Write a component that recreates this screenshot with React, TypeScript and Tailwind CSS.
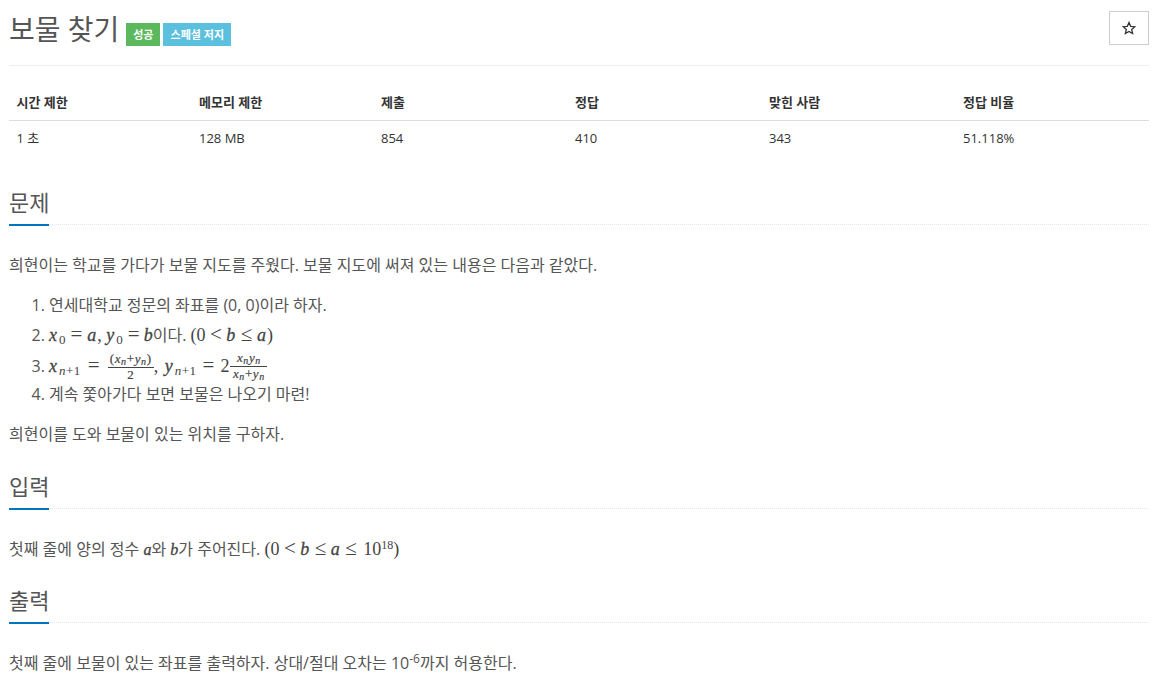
import React from 'react';

const stats = [
  { label: '시간 제한', value: '1 초', width: 'w-[182.5px]' },
  { label: '메모리 제한', value: '128 MB', width: 'w-[182px]' },
  { label: '제출', value: '854', width: 'w-[194px]' },
  { label: '정답', value: '410', width: 'w-[194px]' },
  { label: '맞힌 사람', value: '343', width: 'w-[194px]' },
  { label: '정답 비율', value: '51.118%', width: 'w-[193.5px]' }
];

// math runs are set in a serif; only the italic letters are thickened, like the TeX font
const M: React.FC<{ children: React.ReactNode }> = ({ children }) => (
  <span className="font-['Liberation_Serif',serif] text-[#444] text-[18px]">{children}</span>
);

const V: React.FC<{ children: React.ReactNode; className?: string }> = ({ children, className = 'pr-[1px]' }) => (
  <i className={`[-webkit-text-stroke:0.3px_#444] ${className}`}>{children}</i>
);

const Op: React.FC<{ children: React.ReactNode; className?: string }> = ({ children, className = 'mx-[4.5px]' }) => (
  <span className={`text-[21px] leading-none ${className}`}>{children}</span>
);

const Sub: React.FC<{ children: React.ReactNode }> = ({ children }) => (
  <span className="relative top-[3px] ml-[1px] text-[13px]">{children}</span>
);

const SubN: React.FC = () => (
  <span className="relative top-[3px] ml-[1px] text-[13px] tracking-[0.5px]"><i>n</i>+1</span>
);

const Tiny: React.FC<{ children: React.ReactNode }> = ({ children }) => (
  <i className="relative top-[2px] text-[10px]">{children}</i>
);

const Frac: React.FC<{ top: React.ReactNode; bottom: React.ReactNode; width: string }> = ({ top, bottom, width }) => (
  <span className={`relative -top-[1px] inline-flex flex-col items-center align-middle text-[13px] leading-[14px] tracking-[0.6px] [-webkit-text-stroke:0.2px_#444] ${width}`}>
    <span className="w-full text-center border-b border-[#444]">{top}</span>
    <span className="w-full text-center">{bottom}</span>
  </span>
);

const SectionTitle: React.FC<{ children: React.ReactNode }> = ({ children }) => (
  <div className="border-b border-dotted border-[#e3e8f0] h-[43px] mb-[27px]">
    <h2 className="inline-block h-[44px] border-b-2 border-[#0076c0] text-[22px] leading-[33px] pt-[4px] text-[#555] font-normal">
      {children}
    </h2>
  </div>
);

export default function App() {
  return (
    <div className="w-[1156px] h-[688px] overflow-hidden bg-white pl-[9px] pr-[7px] text-[16px] leading-[26px] text-[#555] font-['Open_Sans','Noto_Sans_CJK_KR',sans-serif]">
      <div className="flex justify-between items-start h-[66px] border-b border-[#eeeeee]">
        <div className="flex items-start">
          <h1 className="text-[28px] leading-[40px] pt-[9px] text-[#555] font-normal">보물 찾기</h1>
          <span className="mt-[23px] ml-[7px] h-[23px] w-[34px] bg-[#5cb85c] text-white text-[11px] font-bold leading-[23px] text-center">성공</span>
          <span className="mt-[23px] ml-[3px] h-[23px] w-[68px] bg-[#5bc0de] text-white text-[11px] font-bold leading-[23px] text-center">스페셜 저지</span>
        </div>
        <button className="mt-[11px] w-[40px] h-[34px] border border-[#cccccc] bg-white flex items-center justify-center">
          <svg width="14" height="14" viewBox="0 0 24 24" fill="none" stroke="#333" strokeWidth="2.2" strokeLinejoin="miter">
            <path d="M12 2.5l2.9 6.6 7.1.7-5.4 4.7 1.6 7-6.2-3.7-6.2 3.7 1.6-7L2 9.8l7.1-.7z" />
          </svg>
        </button>
      </div>

      <table className="mt-[19px] w-full table-fixed border-collapse text-[13px] leading-[20px]">
        <thead>
          <tr className="border-b-[1px] border-[#dddddd] h-[35px]">
            {stats.map(s => (
              <th key={s.label} className={`${s.width} text-left pl-[7.5px] text-[#333] font-bold`}>{s.label}</th>
            ))}
          </tr>
        </thead>
        <tbody>
          <tr className="h-[36px]">
            {stats.map(s => (
              <td key={s.label} className="pl-[7.5px] text-[#333]">{s.value}</td>
            ))}
          </tr>
        </tbody>
      </table>

      <div className="mt-[26px]">
        <SectionTitle>문제</SectionTitle>
        <p>희현이는 학교를 가다가 보물 지도를 주웠다. 보물 지도에 써져 있는 내용은 다음과 같았다.</p>
        <ol className="list-decimal pl-[40px] mt-[14px] mb-[14px]">
          <li>연세대학교 정문의 좌표를 (0, 0)이라 하자.</li>
          <li className="leading-[34px] h-[34px]">
            <M><V>x</V><Sub>0</Sub><Op className="ml-[5px] mr-[5px]">=</Op><V>a</V>, <V>y</V><Sub>0</Sub><Op className="ml-[5px] mr-[4px]">=</Op><V className="">b</V></M>이다. <M>(0<Op>&lt;</Op><V>b</V><Op>≤</Op><V>a</V>)</M>
          </li>
          <li className="leading-[29px] h-[29px]">
            <M>
              <V>x</V><SubN /><Op className="ml-[7px] mr-[8px]">=</Op>
              <Frac width="w-[46px]" top={<>(<i>x</i><Tiny>n</Tiny>+<i>y</i><Tiny>n</Tiny>)</>} bottom="2" />
              , <V className="ml-[2px] pr-[1px]">y</V><SubN /><Op className="ml-[6px] mr-[6px]">=</Op>2
              <span className="ml-[1px]" />
              <Frac width="w-[37px]" top={<><i>x</i><Tiny>n</Tiny><i>y</i><Tiny>n</Tiny></>} bottom={<><i>x</i><Tiny>n</Tiny>+<i>y</i><Tiny>n</Tiny></>} />
            </M>
          </li>
          <li>계속 쫓아가다 보면 보물은 나오기 마련!</li>
        </ol>
        <p>희현이를 도와 보물이 있는 위치를 구하자.</p>
      </div>

      <div className="mt-[19px]">
        <SectionTitle>입력</SectionTitle>
        <p>첫째 줄에 양의 정수 <M><V className="text-[16px]">a</V></M>와 <M><V className="text-[16px]">b</V></M>가 주어진다. <M>(0<Op>&lt;</Op><V>b</V><Op>≤</Op><V>a</V><Op>≤</Op><span className="ml-[2px]">10</span><sup className="text-[12px]">18</sup>)</M></p>
      </div>

      <div className="mt-[17px]">
        <SectionTitle>출력</SectionTitle>
        <p>첫째 줄에 보물이 있는 좌표를 출력하자. 상대/절대 오차는 10<sup className="text-[12px]">-6</sup>까지 허용한다.</p>
      </div>
    </div>
  );
}
